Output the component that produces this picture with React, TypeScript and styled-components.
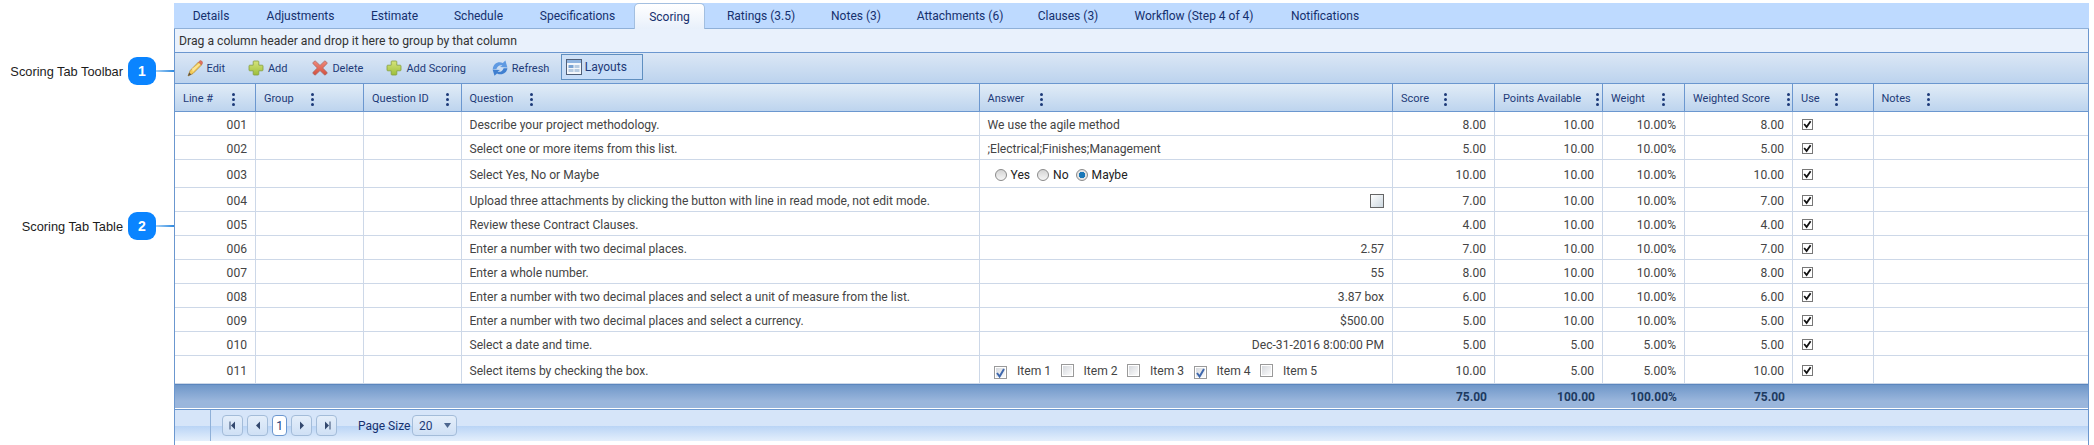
import React from 'react';
import styled, { createGlobalStyle } from 'styled-components';

const GlobalStyle = createGlobalStyle`
  html, body {
    margin: 0;
    padding: 0;
    background: #fff;
  }
  body {
    font-family: Roboto, "Liberation Sans", sans-serif;
    font-size: 12px;
    overflow: hidden;
  }
`;

const Page = styled.div`
  width: 2094px;
  height: 445px;
  display: flex;
  overflow: hidden;
`;

const Notes = styled.aside`
  width: 174px;
  flex: none;
  display: flex;
  flex-direction: column;
  padding-top: 57px;
  gap: 127px;
  box-sizing: border-box;
`;

const Callout = styled.div`
  display: flex;
  align-items: center;
  height: 28px;
  justify-content: flex-end;
`;

const CalloutLabel = styled.span`
  font-family: "Liberation Sans", sans-serif;
  font-size: 12.8px;
  color: #1c1c1c;
  margin-right: 5px;
  white-space: nowrap;
`;

const Badge = styled.span`
  width: 28px;
  height: 28px;
  border-radius: 9px;
  background: #0a84ff;
  color: #fff;
  font-family: "Liberation Sans", sans-serif;
  font-weight: 700;
  font-size: 14px;
  display: flex;
  align-items: center;
  justify-content: center;
`;

const Leader = styled.span`
  width: 18px;
  height: 2px;
  background: linear-gradient(90deg, #a8d2f6, #2f8ae0);
`;

const Panel = styled.main`
  width: 1915px;
  flex: none;
  padding-top: 3px;
  display: flex;
  flex-direction: column;
`;

const TabBar = styled.div`
  height: 26px;
  display: flex;
  align-items: stretch;
  background: #bedaff;
  border-bottom: 1px solid #8fb0d8;
  box-sizing: border-box;
`;

const Tab = styled.div<{ $active?: boolean; $w: number }>`
  width: ${p => p.$w}px;
  flex: none;
  display: flex;
  align-items: center;
  justify-content: center;
  padding-top: 1px;
  color: #15306e;
  white-space: nowrap;
  box-sizing: border-box;
  ${p =>
    p.$active &&
    `
    background: linear-gradient(#ffffff, #e8f0fb);
    border: 1px solid #a3bfe0;
    border-bottom: none;
    border-radius: 5px 5px 0 0;
    margin-bottom: -1px;
  `}
`;

const Body = styled.div`
  flex: 1;
  display: flex;
  flex-direction: column;
  border-left: 1px solid #6b97cf;
  border-right: 1px solid #6b97cf;
`;

const GroupBar = styled.div`
  height: 24px;
  display: flex;
  align-items: center;
  padding-left: 4px;
  background: #e9f1fc;
  border-bottom: 1px solid #6b97cf;
  box-sizing: border-box;
  color: #333;
  font-size: 12.2px;
`;

const Toolbar = styled.div`
  height: 31px;
  display: flex;
  align-items: center;
  background: linear-gradient(#dbe7f5, #bcd3ee);
  box-sizing: border-box;
  border-bottom: 1px solid #6b97cf;
  padding-left: 11.5px;
  color: #1d3a78;
  font-size: 11px;
`;

const ToolButton = styled.div<{ $w: number }>`
  display: flex;
  align-items: center;
  gap: 4px;
  width: ${p => p.$w}px;
  flex: none;
  white-space: nowrap;
`;

const LayoutsButton = styled.div`
  width: 82px;
  height: 26px;
  display: flex;
  align-items: center;
  gap: 3px;
  padding-left: 4px;
  margin-top: -2px;
  box-sizing: border-box;
  border: 1px solid #5f8fc0;
  background: linear-gradient(#cfe1f6, #c5dcf8);
  color: #1d3a78;
  font-size: 12px;
`;

const Table = styled.div`
  display: flex;
  flex-direction: column;
`;

const cols = '81px 108px 97.5px 518px 413.5px 102px 108px 82px 108px 80.5px 1fr';

const HeaderRow = styled.div`
  height: 28px;
  display: grid;
  grid-template-columns: ${cols};
  background: linear-gradient(#e1ecf7, #bdd4ee);
  border-bottom: 1px solid #6b97cf;
  box-sizing: border-box;
`;

const HeaderCell = styled.div`
  display: flex;
  align-items: center;
  padding: 2px 0 0 8px;
  color: #1d3a78;
  font-size: 11px;
  white-space: nowrap;
  border-right: 1px solid #6b97cf;
  box-sizing: border-box;
  &:last-child {
    border-right: none;
  }
`;

const HeaderLabel = styled.span<{ $w: number }>`
  width: ${p => p.$w}px;
  flex: none;
`;

const Dots = styled.span`
  display: flex;
  flex-direction: column;
  gap: 2px;
  margin-top: 2px;
  i {
    width: 3px;
    height: 3px;
    border-radius: 50%;
    background: #1d3a78;
  }
`;

const Row = styled.div<{ $h: number }>`
  height: ${p => p.$h}px;
  display: grid;
  grid-template-columns: ${cols};
  border-bottom: 1px solid #cdd8e8;
  box-sizing: border-box;
`;

const Cell = styled.div<{ $right?: boolean }>`
  display: flex;
  align-items: center;
  justify-content: ${p => (p.$right ? 'flex-end' : 'flex-start')};
  padding: 2px 8px 0;
  color: #444;
  font-size: 12.1px;
  white-space: nowrap;
  border-right: 1px solid #cdd8e8;
  box-sizing: border-box;
  &:last-child {
    border-right: none;
  }
`;

const RadioGroup = styled.div`
  display: flex;
  align-items: center;
  padding-left: 7px;
  gap: 7px;
`;

const RadioLabel = styled.span`
  display: flex;
  align-items: center;
  gap: 4px;
  color: #222;
`;

const Radio = styled.span<{ $on?: boolean }>`
  width: 12px;
  height: 12px;
  border-radius: 50%;
  border: 1px solid #8a8a8a;
  box-sizing: border-box;
  background: ${p =>
    p.$on
      ? 'radial-gradient(circle, #1a78b8 0 3px, #e4e4e4 3.5px)'
      : 'linear-gradient(#d4d4d4, #f6f6f6)'};
`;

const CheckList = styled.div`
  display: flex;
  align-items: center;
  padding-left: 6.5px;
`;

const CheckItem = styled.span`
  width: 66.5px;
  flex: none;
  display: flex;
  align-items: center;
  gap: 10px;
  color: #444;
`;

const SkinBox = styled.span<{ $on?: boolean }>`
  width: 13px;
  height: 13px;
  flex: none;
  margin-top: ${p => (p.$on ? '4px' : '0')};
  border: 1px solid #9a9a9a;
  background: linear-gradient(135deg, #d2d5da, #fff);
  box-shadow: inset 0 0 0 1px #fff;
  box-sizing: border-box;
  display: flex;
  align-items: center;
  justify-content: center;
`;

const AttachBox = styled.span`
  width: 14px;
  height: 14px;
  border: 1px solid #666;
  background: linear-gradient(135deg, #fff, #cdd8e0);
  box-sizing: border-box;
`;

const UseBox = styled.span`
  width: 11px;
  height: 11px;
  margin-left: 1px;
  border: 1px solid #777;
  background: #fff;
  box-sizing: border-box;
  display: flex;
  align-items: center;
  justify-content: center;
`;

const FooterRow = styled.div`
  height: 25px;
  display: grid;
  grid-template-columns: ${cols};
  background: linear-gradient(#6f97c9, #9ab6dc 70%);
  border-top: 1px solid #5b86bd;
  border-bottom: 1px solid #fff;
  box-sizing: border-box;
`;

const FooterCell = styled.div`
  display: flex;
  align-items: center;
  justify-content: flex-end;
  padding: 0 8px;
  font-weight: 700;
  color: #1d3a60;
`;

const Pager = styled.div`
  height: 32px;
  display: flex;
  align-items: center;
  border-top: 1px solid #6b97cf;
  box-sizing: border-box;
  background: linear-gradient(#d6e5f9 0 50%, #b8d3f5 50%, #e4effc 100%);
`;

const PagerGrip = styled.div`
  width: 35px;
  height: 100%;
  border-right: 1px solid #8fb0d8;
  margin-right: 11px;
`;

const PageBtn = styled.div<{ $w?: number; $current?: boolean }>`
  width: ${p => p.$w ?? 21}px;
  height: 21px;
  margin-right: 4px;
  display: flex;
  align-items: center;
  justify-content: center;
  border: 1px solid ${p => (p.$current ? '#6b97cf' : '#a3bcd9')};
  border-radius: 4px;
  box-sizing: border-box;
  color: #1d3a78;
  background: ${p => (p.$current ? '#fff' : 'linear-gradient(#e4eefa, #cfe0f5)')};
`;

const PageSize = styled.span`
  margin-left: 17px;
  margin-right: 4px;
  color: #15306e;
  width: 50px;
  white-space: nowrap;
`;

const SizeSelect = styled.div`
  width: 45px;
  height: 21px;
  display: flex;
  align-items: center;
  justify-content: space-between;
  padding: 0 5px 0 6px;
  box-sizing: border-box;
  border: 1px solid #a3bcd9;
  border-radius: 4px;
  background: linear-gradient(#e4eefa, #cfe0f5);
  color: #1d3a78;
`;

const tabs: [string, number][] = [
  ['Details', 74],
  ['Adjustments', 105],
  ['Estimate', 83],
  ['Schedule', 85],
  ['Specifications', 113],
  ['Scoring', 71],
  ['Ratings (3.5)', 112],
  ['Notes (3)', 78],
  ['Attachments (6)', 130],
  ['Clauses (3)', 86],
  ['Workflow (Step 4 of 4)', 166],
  ['Notifications', 96],
];

const headers: [string, number][] = [
  ['Line #', 48.7],
  ['Group', 47],
  ['Question ID', 74],
  ['Question', 60],
  ['Answer', 52],
  ['Score', 42.5],
  ['Points Available', 93],
  ['Weight', 51],
  ['Weighted Score', 93.5],
  ['Use', 33.5],
  ['Notes', 45],
];

type RowData = {
  line: string;
  question: string;
  answer: React.ReactNode;
  score: string;
  points: string;
  weight: string;
  weighted: string;
  h?: number;
};

const Pencil = () => (
  <svg width="16" height="17" viewBox="0 0 16 17">
    <path d="M3.2 10.5 L11.5 2 L14.5 5 L6 13.5 L1 16 Z" fill="#f3cb57" stroke="#b48c3a" strokeWidth="0.8" strokeLinejoin="round" />
    <path d="M5 8.8 L12.8 3.3 L13.5 4 L5.8 12 Z" fill="#fbe596" />
    <path d="M11.5 2 L13 0.7 Q13.8 0.3 14.6 1 L15.4 1.9 Q15.9 2.7 15.4 3.4 L14.5 5 Z" fill="#e2705c" stroke="#b9614f" strokeWidth="0.5" />
    <path d="M1 16 L2.2 12.4 L4.4 14.6 Z" fill="#5b5347" />
  </svg>
);

const Plus = ({ id }: { id: string }) => (
  <svg width="16" height="16" viewBox="0 0 16 16">
    <defs>
      <linearGradient id={id} x1="0" y1="0" x2="0" y2="1">
        <stop offset="0" stopColor="#d6e47c" />
        <stop offset="1" stopColor="#9dbf3a" />
      </linearGradient>
    </defs>
    <path
      d="M6 1 H10 Q10.8 1 10.8 1.8 V5.2 H14.2 Q15 5.2 15 6 V10 Q15 10.8 14.2 10.8 H10.8 V14.2 Q10.8 15 10 15 H6 Q5.2 15 5.2 14.2 V10.8 H1.8 Q1 10.8 1 10 V6 Q1 5.2 1.8 5.2 H5.2 V1.8 Q5.2 1 6 1 Z"
      fill={`url(#${id})`}
      stroke="#85a040"
      strokeWidth="0.8"
    />
  </svg>
);

const Cross = () => (
  <svg width="16" height="16" viewBox="0 0 16 16">
    <defs>
      <linearGradient id="crossFill" x1="0" y1="0" x2="0" y2="1">
        <stop offset="0" stopColor="#f0897a" />
        <stop offset="1" stopColor="#d4503f" />
      </linearGradient>
    </defs>
    <path
      d="M3.6 1.2 L8 5.4 L12.4 1.2 Q13 0.7 13.6 1.2 L14.9 2.5 Q15.3 3.1 14.9 3.7 L10.7 8 L14.9 12.3 Q15.3 12.9 14.9 13.5 L13.6 14.8 Q13 15.3 12.4 14.8 L8 10.6 L3.6 14.8 Q3 15.3 2.4 14.8 L1.1 13.5 Q0.7 12.9 1.1 12.3 L5.3 8 L1.1 3.7 Q0.7 3.1 1.1 2.5 L2.4 1.2 Q3 0.7 3.6 1.2 Z"
      fill="url(#crossFill)"
      stroke="#a0615c"
      strokeWidth="0.7"
    />
  </svg>
);

const RefreshIcon = () => (
  <svg width="16" height="16" viewBox="0 0 16 16">
    <path d="M0.8 9 C1.2 4 6 1 10.8 3 L13.4 0.6 L15.4 7.5 L8 7 L10.4 5.5 C8 4.6 5.4 6 4.4 9 Z" fill="#5f9ae2" />
    <path d="M15.4 8.2 C15 12.6 10 16 5 13.4 L2.5 15.8 L0.6 9.6 L8 10 L5.6 11.5 C8 12.6 10.6 11.2 11.6 8.2 Z" fill="#3f7fd0" />
  </svg>
);

const LayoutIcon = () => (
  <svg width="16" height="16" viewBox="0 0 16 16">
    <rect x="0.5" y="0.5" width="15" height="15" fill="#f4f7fb" stroke="#4f5f78" />
    <rect x="1" y="1" width="14" height="3" fill="#8fb4e0" />
    <rect x="2.5" y="6" width="5" height="3" fill="#7aa3d2" />
    <rect x="8.5" y="6" width="5" height="3" fill="#b6cbe2" />
    <rect x="2.5" y="10" width="5" height="3" fill="#b6cbe2" />
    <rect x="8.5" y="10" width="5" height="3" fill="#b6cbe2" />
  </svg>
);

const PagerArrow = ({ dir, bar }: { dir: 'l' | 'r'; bar?: boolean }) => (
  <svg width="8" height="9" viewBox="0 0 8 9">
    {dir === 'l' ? <path d="M6 0.5 V8.5 L2 4.5 Z" fill="#33486e" /> : <path d="M2 0.5 V8.5 L6 4.5 Z" fill="#33486e" />}
    {bar && <rect x={dir === 'l' ? 0.5 : 6.5} y="0.5" width="1" height="8" fill="#33486e" />}
  </svg>
);

const BlueCheck = () => (
  <svg width="9" height="10" viewBox="0 0 9 10">
    <path d="M1 5 L3.6 8.5 L8 1" fill="none" stroke="#3f68ad" strokeWidth="2" />
  </svg>
);

const BlackCheck = () => (
  <svg width="9" height="9" viewBox="0 0 9 9">
    <path d="M1.2 4 L3.6 7 L7.6 1.2" fill="none" stroke="#111" strokeWidth="1.8" />
  </svg>
);

const answerRadios = (
  <RadioGroup>
    <RadioLabel>
      <Radio />
      Yes
    </RadioLabel>
    <RadioLabel>
      <Radio />
      No
    </RadioLabel>
    <RadioLabel>
      <Radio $on />
      Maybe
    </RadioLabel>
  </RadioGroup>
);

const answerChecks = (
  <CheckList>
    {[true, false, false, true, false].map((on, i) => (
      <CheckItem key={i}>
        <SkinBox $on={on}>{on && <BlueCheck />}</SkinBox>
        Item {i + 1}
      </CheckItem>
    ))}
  </CheckList>
);

const rows: RowData[] = [
  { line: '001', question: 'Describe your project methodology.', answer: 'We use the agile method', score: '8.00', points: '10.00', weight: '10.00%', weighted: '8.00' },
  { line: '002', question: 'Select one or more items from this list.', answer: ';Electrical;Finishes;Management', score: '5.00', points: '10.00', weight: '10.00%', weighted: '5.00' },
  { line: '003', question: 'Select Yes, No or Maybe', answer: answerRadios, score: '10.00', points: '10.00', weight: '10.00%', weighted: '10.00', h: 28 },
  { line: '004', question: 'Upload three attachments by clicking the button with line in read mode, not edit mode.', answer: <AttachBox />, score: '7.00', points: '10.00', weight: '10.00%', weighted: '7.00' },
  { line: '005', question: 'Review these Contract Clauses.', answer: '', score: '4.00', points: '10.00', weight: '10.00%', weighted: '4.00' },
  { line: '006', question: 'Enter a number with two decimal places.', answer: '2.57', score: '7.00', points: '10.00', weight: '10.00%', weighted: '7.00' },
  { line: '007', question: 'Enter a whole number.', answer: '55', score: '8.00', points: '10.00', weight: '10.00%', weighted: '8.00' },
  { line: '008', question: 'Enter a number with two decimal places and select a unit of measure from the list.', answer: '3.87 box', score: '6.00', points: '10.00', weight: '10.00%', weighted: '6.00' },
  { line: '009', question: 'Enter a number with two decimal places and select a currency.', answer: '$500.00', score: '5.00', points: '10.00', weight: '10.00%', weighted: '5.00' },
  { line: '010', question: 'Select a date and time.', answer: 'Dec-31-2016 8:00:00 PM', score: '5.00', points: '5.00', weight: '5.00%', weighted: '5.00' },
  { line: '011', question: 'Select items by checking the box.', answer: answerChecks, score: '10.00', points: '5.00', weight: '5.00%', weighted: '10.00', h: 28 },
];

const leftAnswers = new Set(['001', '002', '003', '011']);

export default function App() {
  return (
    <Page>
      <GlobalStyle />
      <Notes>
        <Callout>
          <CalloutLabel>Scoring Tab Toolbar</CalloutLabel>
          <Badge>1</Badge>
          <Leader />
        </Callout>
        <Callout>
          <CalloutLabel>Scoring Tab Table</CalloutLabel>
          <Badge>2</Badge>
          <Leader />
        </Callout>
      </Notes>
      <Panel>
        <TabBar>
          {tabs.map(([name, w]) => (
            <Tab key={name} $w={w} $active={name === 'Scoring'}>
              {name}
            </Tab>
          ))}
        </TabBar>
        <Body>
          <GroupBar>Drag a column header and drop it here to group by that column</GroupBar>
          <Toolbar>
            <ToolButton $w={61.4}>
              <Pencil />
              Edit
            </ToolButton>
            <ToolButton $w={64.5}>
              <Plus id="plusAdd" />
              Add
            </ToolButton>
            <ToolButton $w={74}>
              <Cross />
              Delete
            </ToolButton>
            <ToolButton $w={105.4}>
              <Plus id="plusScoring" />
              Add Scoring
            </ToolButton>
            <ToolButton $w={69}>
              <RefreshIcon />
              Refresh
            </ToolButton>
            <LayoutsButton>
              <LayoutIcon />
              Layouts
            </LayoutsButton>
          </Toolbar>
          <Table>
            <HeaderRow>
              {headers.map(([name, w]) => (
                <HeaderCell key={name}>
                  <HeaderLabel $w={w}>{name}</HeaderLabel>
                  <Dots>
                    <i />
                    <i />
                    <i />
                  </Dots>
                </HeaderCell>
              ))}
            </HeaderRow>
            {rows.map(r => (
              <Row key={r.line} $h={r.h ?? 24}>
                <Cell $right>{r.line}</Cell>
                <Cell />
                <Cell />
                <Cell>{r.question}</Cell>
                <Cell $right={!leftAnswers.has(r.line)}>{r.answer}</Cell>
                <Cell $right>{r.score}</Cell>
                <Cell $right>{r.points}</Cell>
                <Cell $right>{r.weight}</Cell>
                <Cell $right>{r.weighted}</Cell>
                <Cell>
                  <UseBox>
                    <BlackCheck />
                  </UseBox>
                </Cell>
                <Cell />
              </Row>
            ))}
            <FooterRow>
              <FooterCell />
              <FooterCell />
              <FooterCell />
              <FooterCell />
              <FooterCell />
              <FooterCell>75.00</FooterCell>
              <FooterCell>100.00</FooterCell>
              <FooterCell>100.00%</FooterCell>
              <FooterCell>75.00</FooterCell>
              <FooterCell />
              <FooterCell />
            </FooterRow>
          </Table>
          <Pager>
            <PagerGrip />
            <PageBtn>
              <PagerArrow dir="l" bar />
            </PageBtn>
            <PageBtn>
              <PagerArrow dir="l" />
            </PageBtn>
            <PageBtn $w={15} $current>
              1
            </PageBtn>
            <PageBtn>
              <PagerArrow dir="r" />
            </PageBtn>
            <PageBtn>
              <PagerArrow dir="r" bar />
            </PageBtn>
            <PageSize>Page Size</PageSize>
            <SizeSelect>
              20
              <svg width="7" height="5" viewBox="0 0 7 5">
                <path d="M0 0 H7 L3.5 5 Z" fill="#4d668f" />
              </svg>
            </SizeSelect>
          </Pager>
        </Body>
      </Panel>
    </Page>
  );
}
